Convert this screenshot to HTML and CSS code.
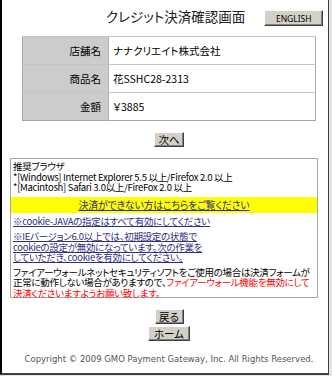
FILE: index.html
```html
<!DOCTYPE html>
<html lang="ja">
<head>
<meta charset="utf-8">
<title>クレジット決済確認画面</title>
<link rel="stylesheet" href="styles.css">
</head>
<body>
<div class="frame">
  <div class="wrap">
    <div class="header">
      <h1 class="title">クレジット決済確認画面</h1>
      <div class="hright"><button class="btn btn-en" type="button">ENGLISH</button></div>
    </div>
    <table class="info">
      <tr><th>店舗名</th><td>ナナクリエイト株式会社</td></tr>
      <tr><th>商品名</th><td>花SSHC28-2313</td></tr>
      <tr><th>金額</th><td>￥3885</td></tr>
    </table>
    <button class="btn btn-next" type="button">次へ</button>
    <div class="notice">
      <p class="browsers">推奨ブラウザ<br>*[Windows] Internet Explorer 5.5 以上/Firefox 2.0 以上<br>*[Macintosh] Safari 3.0以上/FireFox 2.0 以上</p>
      <div class="band"><a href="#">決済ができない方はこちらをご覧ください</a></div>
      <p class="lnk"><a href="#">※cookie-JAVAの指定はすべて有効にしてください</a></p>
      <p class="lnk ie"><a href="#">※IEバージョン6.0以上では、初期設定の状態で<br>cookieの設定が無効になっています。次の作業を<br>していただき、cookieを有効にしてください。</a></p>
      <p class="fw">ファイアーウォールネットセキュリティソフトをご使用の場合は決済フォームが<br>正常に動作しない場合がありますので、<span class="red">ファイアーウォール機能を無効にして<br>決済くださいますようお願い致します。</span></p>
    </div>
    <button class="btn btn-back" type="button">戻る</button>
    <button class="btn btn-home" type="button">ホーム</button>
    <p class="copy">Copyright © 2009 GMO Payment Gateway, Inc. All Rights Reserved.</p>
  </div>
</div>
</body>
</html>
```

FILE: styles.css
```css
html, body {
  margin: 0;
  padding: 0;
}
body {
  width: 332px;
  height: 376px;
  overflow: hidden;
  background: #e4e4e4;
  font-family: "Noto Sans CJK JP", "Noto Sans", sans-serif;
  font-feature-settings: "palt";
  color: #000;
}
.frame {
  box-sizing: border-box;
  width: 329px;
  height: 375px;
  background: #fff;
  border-left: 2px solid #000;
  border-right: 1px solid #404040;
  border-bottom: 2px solid #404040;
}
.wrap {
  margin-left: 8px;
  width: 318px;
  padding-top: 7px;
  display: flex;
  flex-direction: column;
  align-items: center;
}
.header {
  width: 318px;
  display: grid;
  grid-template-columns: 96px auto 1fr;
  align-items: start;
}
.title {
  grid-column: 2;
  margin: 0;
  font-size: 13.5px;
  line-height: 18px;
  font-weight: normal;
  color: #222;
}
.hright {
  display: flex;
  padding-left: 19px;
  padding-top: 3px;
}
.btn {
  display: block;
  box-sizing: border-box;
  background: #d4d0c8;
  border: 1px solid;
  border-color: #ffffff #404040 #404040 #ffffff;
  box-shadow: inset -1px -1px 0 #808080;
  padding: 0;
  font-family: "Noto Sans CJK JP", sans-serif;
  font-feature-settings: "palt";
  font-size: 10.5px;
  line-height: 13px;
  color: #000;
}
.btn-en {
  width: 59px;
  height: 16px;
  font-size: 8.5px;
  font-family: "Noto Sans", sans-serif;
}
.info {
  margin-top: 10px;
  width: 294px;
  border-collapse: collapse;
  border: 1px solid #a8a8a8;
  font-size: 10.5px;
  line-height: 14px;
}
.info th, .info td {
  height: 27px;
  padding: 0;
  border-top: 1px solid #c4c4c4;
  font-weight: normal;
}
.info th {
  width: 86px;
  background: #cccccc;
  text-align: right;
  padding-right: 7px;
  box-sizing: border-box;
  border-right: 1px solid #b0b0b0;
}
.info td {
  padding-left: 4px;
  text-align: left;
}
.btn-next {
  margin-top: 11px;
  width: 30px;
  height: 15px;
}
.notice {
  align-self: flex-start;
  margin-top: 11px;
  box-sizing: border-box;
  width: 308px;
  height: 140px;
  border: 1px solid #a8a8a8;
  padding: 2px 2px 0 2px;
  font-size: 9.5px;
  letter-spacing: -0.3px;
  line-height: 10.5px;
  white-space: nowrap;
}
.notice p {
  margin: 0;
}
.notice a {
  color: #2f2f80;
  text-decoration: underline;
}
.band {
  margin: 4px -2px 0 -2px;
  height: 16px;
  line-height: 16px;
  background: #ffff00;
  text-align: center;
  font-size: 10px;
}
.lnk {
  margin-top: 3px !important;
}
.ie {
  margin-top: 5px !important;
}
.fw {
  margin-top: 4px !important;
}
.red {
  color: #ff0000;
}
.btn-back {
  margin-top: 11px;
  width: 29px;
  height: 15px;
}
.btn-home {
  margin-top: 2px;
  width: 42px;
  height: 15px;
}
.copy {
  margin: 13px 0 0 0;
  font-family: "DejaVu Sans", sans-serif;
  font-size: 8.5px;
  line-height: 10px;
  color: #555;
  white-space: nowrap;
}
```
